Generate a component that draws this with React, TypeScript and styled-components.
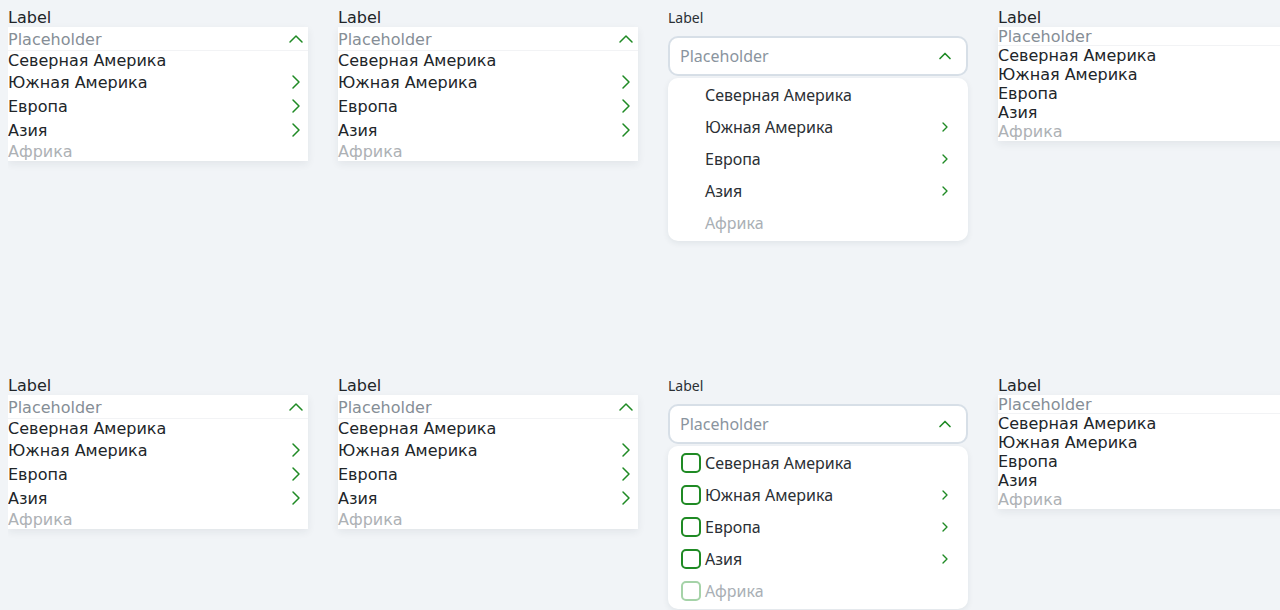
import React from "react";
import styled, { createGlobalStyle } from "styled-components";
import { ChevronUp, ChevronRight } from "lucide-react";

const GREEN = "#1f8a24";

const GlobalStyle = createGlobalStyle`
  html {
    overflow: hidden;
    background: #f1f4f7;
  }
  body {
    margin: 8px 0 0 8px;
    padding: 0;
    font-family: "DejaVu Sans", sans-serif;
    color: #212529;
  }
`;

const Page = styled.div`
  display: grid;
  grid-template-columns: repeat(4, 300px);
  grid-auto-rows: 338px;
  column-gap: 30px;
  row-gap: 30px;
  width: max-content;
`;

const Cell = styled.div`
  display: flex;
  flex-direction: column;
  align-items: flex-start;
`;

/* unstyled variant */

const PlainLabel = styled.div`
  font-size: 16px;
  line-height: 19px;
  color: #212529;
`;

const PlainBox = styled.div`
  width: 300px;
  background: #fff;
  box-shadow: 0 3px 8px rgba(30, 45, 60, 0.07);
  font-size: 16px;
  line-height: 19px;
`;

const PlainHeader = styled.div`
  display: flex;
  align-items: center;
  justify-content: space-between;
  color: #868e96;
  box-shadow: inset 0 -1px 0 #f2f3f5;

  svg {
    display: block;
    color: ${GREEN};
  }
`;

const PlainItem = styled.div<{ $disabled?: boolean }>`
  display: flex;
  align-items: center;
  justify-content: space-between;
  color: ${(p) => (p.$disabled ? "#adb1b5" : "#212529")};

  svg {
    display: block;
    color: ${GREEN};
  }
`;

/* styled variant */

const Field = styled.div`
  width: 300px;
  font-family: "Noto Sans", sans-serif;
`;

const SmallLabel = styled.div`
  font-size: 14px;
  line-height: 20px;
  color: #2b3035;
  margin-bottom: 8px;
`;

const Trigger = styled.div`
  height: 40px;
  box-sizing: border-box;
  border: 2px solid #d7dfe7;
  border-radius: 10px;
  background: #fff;
  display: flex;
  align-items: center;
  justify-content: space-between;
  padding: 0 11px 0 10px;
  font-size: 16px;
  color: #8a949e;

  svg {
    display: block;
    color: ${GREEN};
  }
`;

const Panel = styled.div`
  margin-top: 2px;
  padding: 1px 0 2px;
  background: #fff;
  border-radius: 10px;
  box-shadow: 0 2px 6px rgba(30, 45, 60, 0.08);
`;

const Option = styled.div<{ $disabled?: boolean }>`
  height: 32px;
  display: flex;
  align-items: center;
  gap: 4px;
  padding: 0 15px 0 13px;
  font-size: 16px;
  color: ${(p) => (p.$disabled ? "#a9afb5" : "#2b3035")};

  svg {
    display: block;
    color: ${GREEN};
  }
`;

const OptionText = styled.span`
  flex: 1;
`;

const Check = styled.span<{ $visible: boolean; $disabled?: boolean }>`
  width: 20px;
  height: 20px;
  box-sizing: border-box;
  border-radius: 5px;
  border: 2px solid
    ${(p) => (!p.$visible ? "transparent" : p.$disabled ? "#a5d3a8" : GREEN)};
  flex-shrink: 0;
`;

const regions = [
  { name: "Северная Америка", sub: false, disabled: false },
  { name: "Южная Америка", sub: true, disabled: false },
  { name: "Европа", sub: true, disabled: false },
  { name: "Азия", sub: true, disabled: false },
  { name: "Африка", sub: false, disabled: true },
];

function PlainSelect({ icons }: { icons: boolean }) {
  return (
    <Cell>
      <PlainLabel>Label</PlainLabel>
      <PlainBox>
        <PlainHeader>
          Placeholder
          {icons && <ChevronUp size={24} strokeWidth={1.5} />}
        </PlainHeader>
        {regions.map((r) => (
          <PlainItem key={r.name} $disabled={r.disabled}>
            {r.name}
            {icons && r.sub && <ChevronRight size={24} strokeWidth={1.5} />}
          </PlainItem>
        ))}
      </PlainBox>
    </Cell>
  );
}

function FancySelect({ checkbox }: { checkbox: boolean }) {
  return (
    <Cell>
      <Field>
        <SmallLabel>Label</SmallLabel>
        <Trigger>
          Placeholder
          <ChevronUp size={20} strokeWidth={2} />
        </Trigger>
        <Panel>
          {regions.map((r) => (
            <Option key={r.name} $disabled={r.disabled}>
              <Check $visible={checkbox} $disabled={r.disabled} />
              <OptionText>{r.name}</OptionText>
              {r.sub && <ChevronRight size={16} strokeWidth={2} />}
            </Option>
          ))}
        </Panel>
      </Field>
    </Cell>
  );
}

export default function App() {
  return (
    <>
      <GlobalStyle />
      <Page>
        <PlainSelect icons />
        <PlainSelect icons />
        <FancySelect checkbox={false} />
        <PlainSelect icons={false} />
        <PlainSelect icons />
        <PlainSelect icons />
        <FancySelect checkbox />
        <PlainSelect icons={false} />
      </Page>
    </>
  );
}
